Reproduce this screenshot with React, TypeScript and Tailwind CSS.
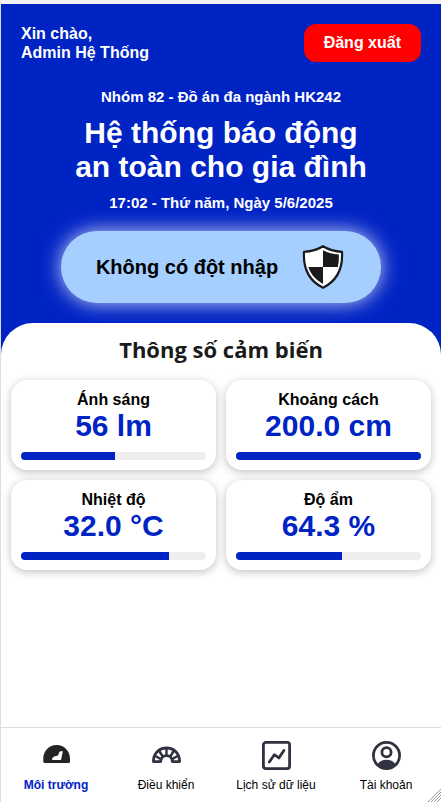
import React from "react";

type Sensor = { name: string; value: string; percent: number };

const sensors: Sensor[] = [
  { name: "Ánh sáng", value: "56 lm", percent: 51 },
  { name: "Khoảng cách", value: "200.0 cm", percent: 100 },
  { name: "Nhiệt độ", value: "32.0 °C", percent: 80 },
  { name: "Độ ẩm", value: "64.3 %", percent: 57.4 },
];

function ShieldIcon() {
  return (
    <svg className="h-11 w-11" viewBox="0 0 44 44" aria-hidden="true">
      <path d="M21 1.200C15.500 4.600 9 6.400 2 6.800c-.8 13 2 27.500 19 36.000C38 34.300 40.800 19.800 40 6.800 33 6.400 26.500 4.600 21 1.200Z" fill="#fff" stroke="#1b1b1b" strokeWidth="2.200" strokeLinejoin="round" />
      <path d="M21 5.200c5 2.500 10 3.800 15.800 4.400.2 4.200.1 8.300-1 12.400H21Z" fill="#1b1b1b" />
      <path d="M21 22V39C13.500 34.500 8.500 29 6.300 22Z" fill="#1b1b1b" />
    </svg>
  );
}

function GaugeIcon() {
  return (
    <svg className="h-8 w-8" viewBox="0 0 32 32" aria-hidden="true">
      <path fillRule="evenodd" d="M16.600 5C9 5 3.300 11 3.300 18.500V21.500q0 1.500 1.500 1.500h23.700q1.500 0 1.500-1.500v-3C30 11 24.200 5 16.600 5Zm5.200 6.000 1 .6-1.800 8.400h-9c.2-2 1-3.500 4-4l2-.5 1.500-3.800Z" fill="#242424" />
    </svg>
  );
}

function DialIcon() {
  return (
    <svg className="h-8 w-8" viewBox="0 0 32 32" fill="none" stroke="#303240" strokeWidth="2.800" aria-hidden="true">
      <path d="M3.400 21.600C3.400 13.500 9 8 16.500 8s13.100 5.500 13.100 13.600h-7.300c0-3.300-2.200-6-5.800-6s-5.800 2.700-5.800 6Z" strokeLinejoin="round" />
      <path d="M16.500 8v8M9 10.500l3.700 6M24 10.500l-3.700 6M4.500 15.500l7 4M28.500 15.500l-7 4" strokeWidth="2.400" />
    </svg>
  );
}

function ChartIcon() {
  return (
    <svg className="h-8 w-8" viewBox="0 0 32 32" fill="none" stroke="#303240" strokeWidth="2.800" strokeLinecap="round" strokeLinejoin="round" aria-hidden="true">
      <rect x="3.400" y="2.400" width="26.200" height="26.200" rx="2.500" />
      <path d="m9.300 22 5-7.300 4.600 3.200 5-7.400" />
    </svg>
  );
}

function AccountIcon() {
  return (
    <svg className="h-8 w-8" viewBox="0 0 32 32" fill="none" stroke="#303240" strokeWidth="2.800" aria-hidden="true">
      <circle cx="16.500" cy="15.500" r="13.100" />
      <circle cx="16.500" cy="12.200" r="4.600" />
      <path d="M7.500 25.000c1.500-4 5-5.300 9-5.300s7.500 1.300 9 5.300c-5 5-13 5-18 0Z" fill="#303240" stroke="none" />
    </svg>
  );
}

const tabs = [
  { label: "Môi trường", Icon: GaugeIcon },
  { label: "Điều khiển", Icon: DialIcon },
  { label: "Lịch sử dữ liệu", Icon: ChartIcon },
  { label: "Tài khoản", Icon: AccountIcon },
];

function SensorCard({ name, value, percent }: Sensor) {
  return (
    <article className="rounded-2xl bg-white p-2.5 text-center font-bold shadow-[0_2px_8px_rgba(0,0,0,0.25)]">
      <h3 className="text-base leading-5 text-black">{name}</h3>
      <p className="text-[30px] leading-8 text-[#0023c4]">{value}</p>
      <div className="mt-2.5 h-2 overflow-hidden rounded-full bg-[#eeeeee]">
        <div className="h-full bg-[#0023c4]" style={{ width: `${percent}%` }} />
      </div>
    </article>
  );
}

export default function App() {
  return (
    <div className="flex min-h-screen flex-col border-l border-t-4 border-l-[#dddddd] border-t-[#f1f1f1] bg-white font-['Liberation_Sans',Arial,sans-serif]">
      <div className="bg-[#0023c4]">
        <header className="px-5 pb-5 pt-5 text-center font-bold text-white">
          <div className="flex items-start justify-between text-left">
            <p className="text-base leading-[19px]">
              Xin chào,
              <br />
              Admin Hệ Thống
            </p>
            <button type="button" className="rounded-xl bg-[#ff0000] px-5 py-2 text-base leading-[22px]">
              Đăng xuất
            </button>
          </div>
          <p className="mt-6 text-[15px] leading-[22px]">Nhóm 82 - Đồ án đa ngành HK242</p>
          <h1 className="mt-2 text-[30px] leading-[34px]">
            Hệ thống báo động
            <br />
            an toàn cho gia đình
          </h1>
          <p className="mt-2 text-[15px] leading-[22px]">17:02 - Thứ năm, Ngày 5/6/2025</p>
          <div className="mx-auto mt-[17px] flex h-[72px] w-full max-w-80 items-center justify-center gap-6 rounded-full bg-[#a4cfff] text-black shadow-[0_0_20px_rgba(255,255,255,0.8)]">
            <span className="text-xl">Không có đột nhập</span>
            <ShieldIcon />
          </div>
        </header>
        <div className="h-8 rounded-t-[32px] bg-white" />
      </div>
      <main className="-mt-8 flex-1 px-2.5 pt-3">
        <h2 className="text-center font-['Open_Sans','Noto_Sans',sans-serif] text-[22px] font-bold leading-7 text-[#1a1a1a]">Thông số cảm biến</h2>
        <div className="mt-[17px] grid grid-cols-2 gap-2.5">
          {sensors.map((s) => (
            <SensorCard key={s.name} {...s} />
          ))}
        </div>
      </main>
      <nav className="relative grid grid-cols-4 border-t border-[#dddddd] pb-2 pt-3">
        {tabs.map(({ label, Icon }, i) => (
          <a key={label} href="#" className={`flex flex-col items-center gap-1 text-xs leading-[18px] ${i === 0 ? "font-bold text-[#0023c4]" : "text-black"}`}>
            <Icon />
            {label}
          </a>
        ))}
        <svg className="absolute bottom-0 right-0 h-3.5 w-3.5" viewBox="0 0 14 14" stroke="#999" aria-hidden="true">
          <path d="M1 14 14 1M4 14 14 4M7 14l7-7M10 14l4-4" />
        </svg>
      </nav>
    </div>
  );
}
